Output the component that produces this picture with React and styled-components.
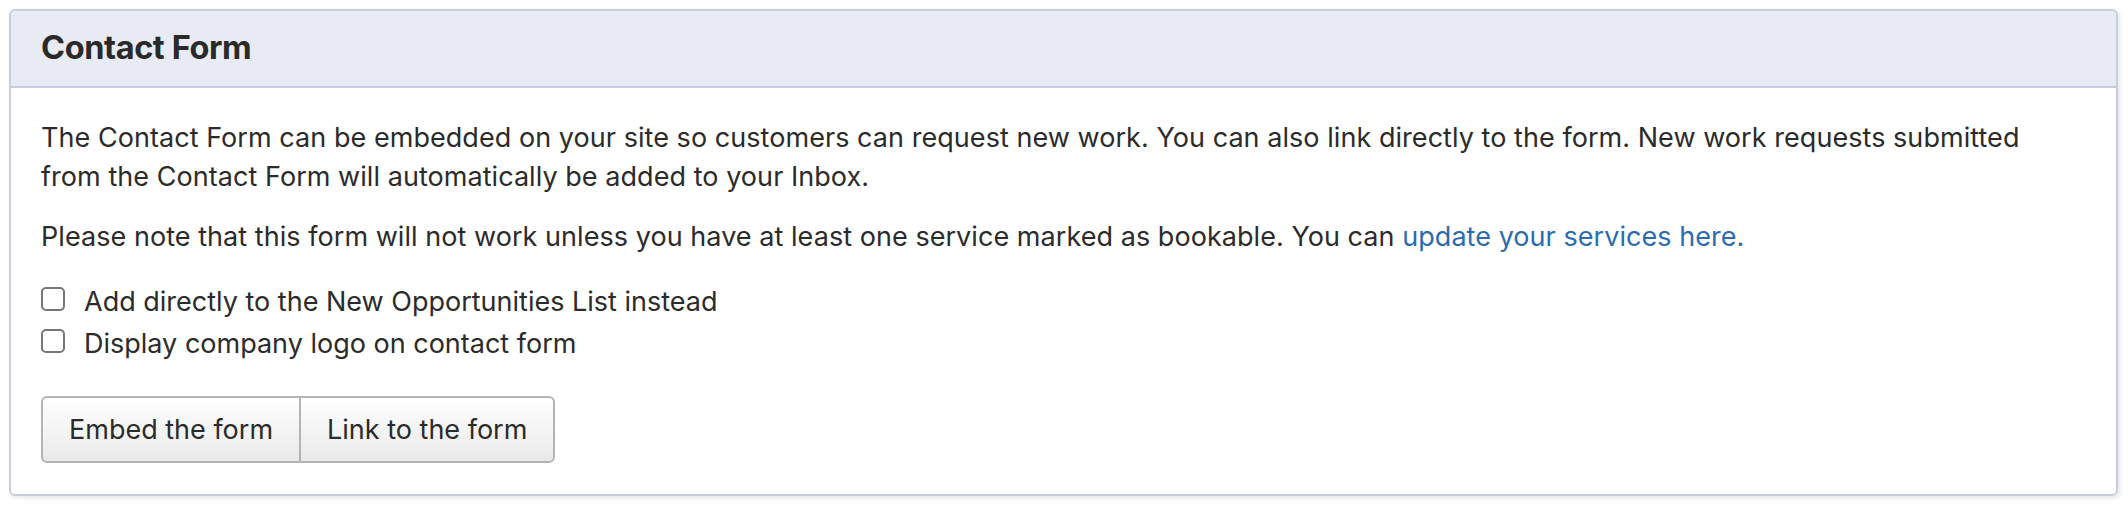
import React from 'react'
import styled, { createGlobalStyle } from 'styled-components'

const GlobalStyle = createGlobalStyle`
    html, body {
        margin: 0;
        padding: 0;
        background: #ffffff;
    }
    body {
        font-family: Inter, "Noto Sans", "Liberation Sans", sans-serif;
        color: #2b2b2b;
    }
`;

function Checkbox(props) {
    return (
        <CheckRow>
            <Box type="checkbox" defaultChecked={props.checked} />
            <span>{props.label}</span>
        </CheckRow>
    )
}

function App() {
    return (
        <Page>
            <GlobalStyle />
            <Card>
                <CardHeader>
                    <h2>Contact Form</h2>
                </CardHeader>
                <CardBody>
                    <Text>
                        The Contact Form can be embedded on your site so customers can request new work. You can also link directly to the form. New work requests submitted from the Contact Form will automatically be added to your Inbox.
                    </Text>
                    <Text>
                        Please note that this form will not work unless you have at least one service marked as bookable. You can <Link href="#">update your services here.</Link>
                    </Text>
                    <CheckList>
                        <Checkbox label="Add directly to the New Opportunities List instead" />
                        <Checkbox label="Display company logo on contact form" />
                    </CheckList>
                    <ButtonGroup>
                        <Button first>Embed the form</Button>
                        <Button>Link to the form</Button>
                    </ButtonGroup>
                </CardBody>
            </Card>
        </Page>
    )
}

export default App

const Page = styled.div`
    padding: 9px 10px 9px 9px;
`;

const Card = styled.div`
    border: 2px solid #c9cde0;
    border-radius: 6px;
    background: #ffffff;
    box-shadow: 2px 2px 4px rgba(40, 50, 90, 0.12);
    overflow: hidden;
`;

const CardHeader = styled.div`
    background-color: #e8ebf3;
    border-bottom: 2px solid #c9cde0;
    padding: 18px 30px 20px;
    h2 {
        margin: 0;
        font-size: 32.5px;
        line-height: 37px;
        font-weight: 700;
        color: #2a2a2a;
        letter-spacing: -0.4px;
    }
`;

const CardBody = styled.div`
    padding: 31px 30px 31px;
`;

const Text = styled.p`
    margin: 0 0 22px;
    max-width: 1990px;
    font-size: 27px;
    line-height: 38.6px;
    letter-spacing: 0.05px;
    color: #2b2b2b;
`;

const Link = styled.a`
    color: #2c6bb0;
    text-decoration: none;
`;

const CheckList = styled.div`
    display: flex;
    flex-direction: column;
    margin-top: 24px;
`;

const CheckRow = styled.label`
    display: flex;
    align-items: center;
    height: 42px;
    font-size: 27px;
    color: #2b2b2b;
`;

const Box = styled.input`
    appearance: none;
    -webkit-appearance: none;
    width: 24px;
    height: 24px;
    margin: 0 19px 5px 0;
    border: 2px solid #767676;
    border-radius: 5px;
    background: #ffffff;
    box-sizing: border-box;
`;

const ButtonGroup = styled.div`
    display: flex;
    margin-top: 31px;
`;

const Button = styled.button`
    height: 67px;
    padding: 0 26px;
    font-family: Inter, "Noto Sans", "Liberation Sans", sans-serif;
    font-size: 27px;
    color: #2b2b2b;
    background: linear-gradient(to bottom, #ffffff 0%, #e9e9e9 100%);
    border: 2px solid #b4b4b4;
    border-radius: ${p => (p.first ? '6px 0 0 6px' : '0 6px 6px 0')};
    margin-left: ${p => (p.first ? '0' : '-2px')};
    cursor: pointer;
`;
